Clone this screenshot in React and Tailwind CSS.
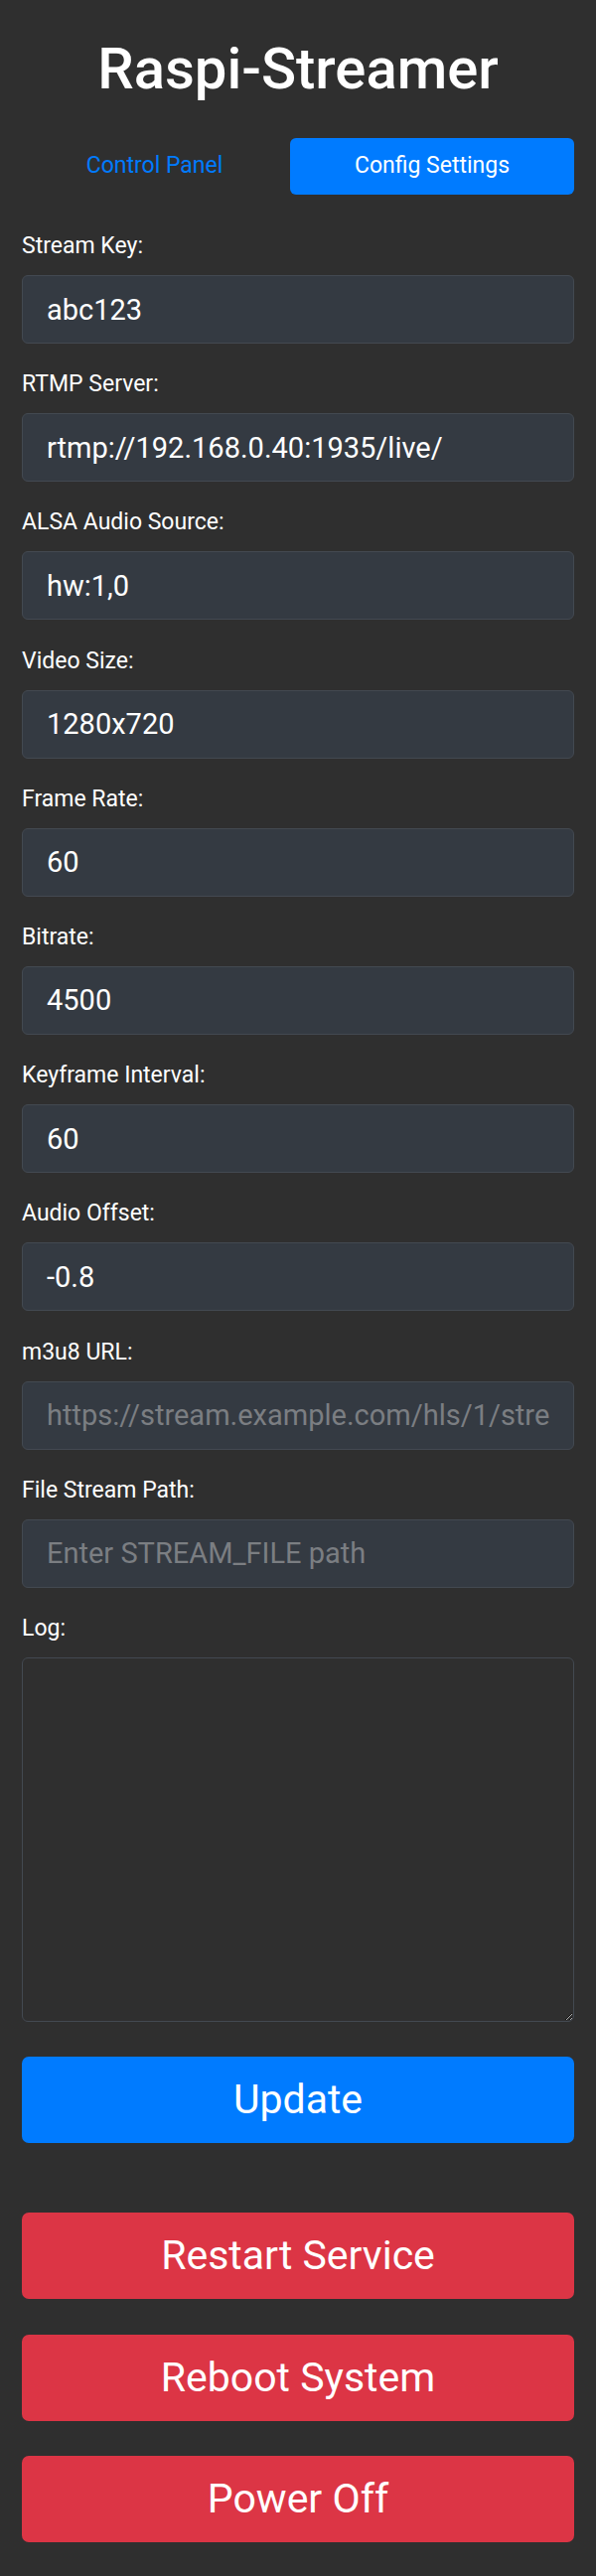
import React from "react";

const fields = [
  { label: "Stream Key:", value: "abc123" },
  { label: "RTMP Server:", value: "rtmp://192.168.0.40:1935/live/" },
  { label: "ALSA Audio Source:", value: "hw:1,0" },
  { label: "Video Size:", value: "1280x720" },
  { label: "Frame Rate:", value: "60" },
  { label: "Bitrate:", value: "4500" },
  { label: "Keyframe Interval:", value: "60" },
  { label: "Audio Offset:", value: "-0.8" },
  { label: "m3u8 URL:", placeholder: "https://stream.example.com/hls/1/stream.m3u8" },
  { label: "File Stream Path:", placeholder: "Enter STREAM_FILE path" },
];

export default function App() {
  return (
    <div
      className="min-h-[2594px] w-[600px] bg-[#2f2f2f] text-white px-[22px] pt-[34px] pb-[35px]"
      style={{ fontFamily: "Roboto, 'Noto Sans', sans-serif" }}
    >
      <h1 className="text-center text-[58px] leading-[70px] font-medium m-0">Raspi-Streamer</h1>
      <div className="flex gap-[3px] mt-[35px]">
        <button className="flex-1 h-[57px] text-[23px] text-[#007bff] bg-transparent rounded-[6px]">
          Control Panel
        </button>
        <button className="w-[286px] h-[57px] text-[23px] text-white bg-[#007bff] rounded-[6px]">
          Config Settings
        </button>
      </div>
      <div className="mt-[39px]">
        {fields.map((f) => (
          <div key={f.label} className="mb-[28.2px]">
            <label className="block text-[23px] leading-[26px] mb-4 text-white">{f.label}</label>
            <input
              readOnly
              value={f.value || ""}
              placeholder={f.placeholder || ""}
              className="block w-full h-[69px] box-border pl-[24px] pr-[24px] text-[29px] text-white bg-[#343a42] border border-[#434951] rounded-[6px] outline-none placeholder:text-[#7b7e82]"
            />
          </div>
        ))}
        <div>
          <label className="block text-[23px] leading-[26px] mb-4 text-white">Log:</label>
          <textarea
            readOnly
            className="block w-full h-[367px] box-border bg-[#2f2f2f] border border-[#434951] rounded-[6px] outline-none"
          />
        </div>
      </div>
      <button className="block w-full h-[87px] mt-[35.5px] bg-[#007bff] text-white text-[41px] rounded-[7px]">
        Update
      </button>
      <div className="mt-[70px] flex flex-col gap-[35.5px]">
        <button className="block w-full h-[87px] bg-[#dc3545] text-white text-[41px] rounded-[7px]">
          Restart Service
        </button>
        <button className="block w-full h-[87px] bg-[#dc3545] text-white text-[41px] rounded-[7px]">
          Reboot System
        </button>
        <button className="block w-full h-[87px] bg-[#dc3545] text-white text-[41px] rounded-[7px]">
          Power Off
        </button>
      </div>
    </div>
  );
}
